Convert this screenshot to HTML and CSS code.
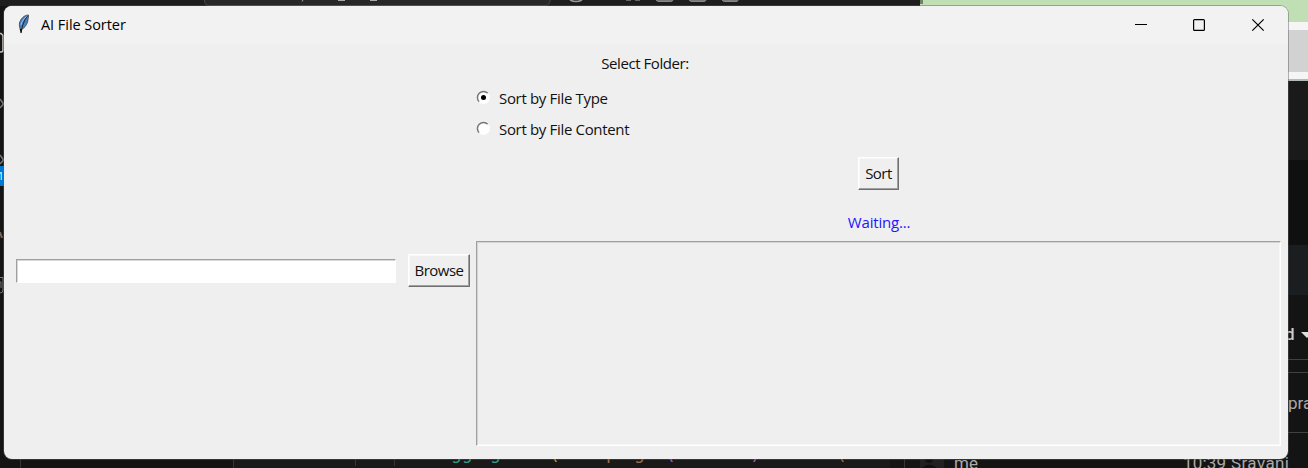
FILE: index.html
```html
<!DOCTYPE html>
<html lang="en">
<head>
<meta charset="utf-8">
<title>AI File Sorter</title>
<link rel="stylesheet" href="styles.css">
</head>
<body>
<div class="desktop">
  <svg class="backdrop" width="1308" height="468" viewBox="0 0 1308 468" aria-hidden="true">
    <rect width="1308" height="468" fill="#141414"/>
    <!-- editor title strip -->
    <rect width="920" height="6" fill="#1e1e1e"/>
    <path d="M204.500 0q0 5.500 5 5.500H545q5 0 5-5.500" fill="#282828" stroke="#4a4a4a"/>
    <path d="M302 1.500l1-1.500M338 .5h7M370 .5h7" stroke="#aaa"/>
    <path d="M570 0q6 3 12 0" fill="none" stroke="#999" stroke-width="1.500"/>
    <path d="M626 .5h5M635 .5h5" stroke="#666"/>
    <path d="M656 0q1 1.500 3 1.500h11q3 0 3-1.500M689 0q1 1.500 3 1.500h11q3 0 3-1.500M722 0q1 1.500 3 1.500h11q2 0 2-1.500M729.500 0v1" fill="#777" stroke="#888"/>
    <!-- browser edge -->
    <rect x="920" width="388" height="22" fill="#c1dfb5"/>
    <rect x="920" width="3" height="4" fill="#6f8267"/>
    <rect x="1280" y="22" width="28" height="58" fill="#f5f5f5"/>
    <rect x="1280" y="30" width="28" height="42" fill="#d2d2d2"/>
    <rect x="1280" y="79" width="28" height="2" fill="#b2bbb6"/>
    <rect x="1280" y="81" width="28" height="79" fill="#1a1a1a"/>
    <rect x="1280" y="160" width="28" height="85" fill="#101010"/>
    <rect x="1280" y="245" width="28" height="50" fill="#1b1e20"/>
    <path d="M1288 359.500h20M1288 372.500h20M1288 432.500h20" stroke="#414141"/>
    <path d="M1301 332h12l-6 6z" fill="#ddd"/>
    <g class="browser-text">
      <text x="1285" y="340" class="strong">d</text>
      <text x="1288" y="409">pra</text>
      <text x="954" y="468.500">me</text>
      <text x="1183" y="469" textLength="43">10:39</text>
      <text x="1231" y="469" textLength="58">Sravani</text>
    </g>
    <rect x="920" y="459" width="24" height="9" fill="#202222"/>
    <circle cx="929" cy="459" r="4" fill="#111"/>
    <path d="M922 468q7-7 15 0" fill="#111"/>
    <!-- activity bar fragments -->
    <path d="M-4 33.500H1l2 2V50q0 2-2 2h-5" fill="none" stroke="#c9c4bc" stroke-width="1.500"/>
    <path d="M0 99l3.500 5L0 108M0 155l3.500 5L0 164" fill="none" stroke="#777" stroke-width="1.500"/>
    <rect y="166" width="4" height="20" fill="#0078d4"/>
    <text x="-2" y="180" class="badge">1</text>
    <path d="M0 232l2 6" stroke="#76645a" stroke-width="2"/>
    <path d="M0 277.500h3V290q0 3-3 3M0 282h1v6" fill="none" stroke="#777"/>
    <!-- code rows below the window -->
    <rect x="233" y="459" width="657" height="9" fill="#191919"/>
    <path d="M20.500 459v9M233.500 459v9M355.500 459v7M394.500 459v7M904.500 459v9" stroke="#353535"/>
    <g class="code-text">
      <text x="451" y="459">gg</text>
      <text x="490" y="459">g</text>
      <text x="549" y="460" class="yellow">(</text>
      <text x="606" y="459" class="string">p</text>
      <text x="634" y="459" class="string">g</text>
      <text x="665" y="460" class="purple">(</text>
      <text x="750" y="460" class="purple">)</text>
      <text x="836" y="460" class="string">(</text>
    </g>
  </svg>

  <main class="window">
    <header class="titlebar">
      <svg class="feather" width="14" height="21" viewBox="0 0 14 21">
        <path d="M11.500 1C7 1 3.500 5 2.500 9c-.5 3 .3 5.500 1.500 6.500 3-1 5.500-4 6.500-7.500.6-2 .9-4.500 1-7z" fill="#4480c8" stroke="#55585d"/>
        <path d="M10.500 2C7.500 6 5 11 4.200 19" fill="none" stroke="#222"/>
        <path d="M9.500 2.500C6.500 5 4.500 8 4 11" fill="none" stroke="#9ec6ee"/>
        <path d="M2.500 14.500l1.300 5 1.500-4z" fill="#111"/>
      </svg>
      <h1 class="title">AI File Sorter</h1>
      <svg class="control" width="58" height="38" viewBox="0 0 58 38"><path d="M23 18.500h12"/></svg>
      <svg class="control" width="58" height="38" viewBox="0 0 58 38"><rect x="23.600" y="13.600" width="10.800" height="10.800" rx="1"/></svg>
      <svg class="control" width="60" height="38" viewBox="0 0 60 38"><path d="M24.300 13.300l11.400 11.400M35.700 13.300L24.300 24.700"/></svg>
    </header>
    <section class="client">
      <div class="heading"><span class="label label-folder">Select Folder:</span></div>
      <div class="columns">
        <div class="picker">
          <input class="entry" type="text" aria-label="Folder">
          <button class="button browse">Browse</button>
        </div>
        <div class="options">
          <div class="choice">
            <svg class="radio" width="15" height="15" viewBox="0 0 15 15"><circle cx="7.500" cy="7.500" r="6" fill="#fff"/><path d="M3.200 11.800A6 6 0 0 1 11.800 3.200" class="radio-shade"/><path d="M11.800 3.200A6 6 0 0 1 3.200 11.800" class="radio-light"/><circle cx="7.500" cy="7.500" r="2.500"/></svg>
            <span class="label">Sort by File Type</span>
          </div>
          <div class="choice">
            <svg class="radio" width="15" height="15" viewBox="0 0 15 15"><circle cx="7.500" cy="7.500" r="6" fill="#fff"/><path d="M3.200 11.800A6 6 0 0 1 11.800 3.200" class="radio-shade"/><path d="M11.800 3.200A6 6 0 0 1 3.200 11.800" class="radio-light"/></svg>
            <span class="label">Sort by File Content</span>
          </div>
          <button class="button sort">Sort</button>
          <p class="status">Waiting...</p>
          <div class="output"></div>
        </div>
      </div>
    </section>
  </main>
</div>
</body>
</html>
```
FILE: styles.css
```css
* { box-sizing: border-box; }
body { margin: 0; overflow: hidden; font-family: "Open Sans", "Noto Sans", sans-serif; color: #111; }
.desktop { position: relative; width: 1308px; height: 468px; overflow: hidden; }
.backdrop { display: block; }
.browser-text { font: 17px Roboto, sans-serif; fill: #aaa; }
.strong { font-weight: 500; fill: #ccc; }
.badge { font: 10px "Open Sans", sans-serif; fill: #fff; }
.code-text { font: 18px "DejaVu Sans Mono", monospace; fill: #2aa187; }
.yellow { fill: #c5a000; }
.string { fill: #a66a50; }
.purple { fill: #b558bd; }

.window {
  position: absolute; left: 4px; top: 6px; width: 1284px; height: 453px;
  display: flex; flex-direction: column; overflow: hidden;
  background: #efefef; border-radius: 8px;
  box-shadow: 0 0 0 1px rgba(90, 90, 90, .45);
}
.titlebar { display: flex; align-items: center; height: 38px; flex: none; padding-left: 13px; background: #f2f2f2; }
.feather { margin-top: -2px; }
.title { flex: 1; margin: 0 0 0 10px; font-size: 14.500px; line-height: 20px; font-weight: 400; letter-spacing: -.05px; color: #000; }
.control { fill: none; stroke: #000; stroke-width: 1.200; }

.client { flex: 1; display: flex; flex-direction: column; font-size: 15px; line-height: 20px; letter-spacing: -.33px; }
.heading { height: 38px; padding-top: 9px; text-align: center; }
.label-folder { letter-spacing: -.43px; margin-right: 2px; }
.columns { flex: 1; display: flex; }
.picker { width: 472px; display: flex; align-items: center; gap: 12px; padding: 0 6px 0 12px; }
.entry {
  width: 381px; height: 24px; padding: 0 4px; outline: 0; border-radius: 0; background: #fff;
  border: 1px solid; border-color: #a0a0a0 #fff #fff #a0a0a0;
  box-shadow: inset 1px 1px #d7d7d7;
}
.options { width: 805px; display: flex; flex-direction: column; }
.choice { display: flex; align-items: center; height: 31px; gap: 8px; }
.choice .label { padding-top: 1px; }
.radio { display: block; }
.radio-shade { fill: none; stroke: #777; stroke-width: 1.500; }
.radio-light { fill: none; stroke: #fff; }
.label { white-space: nowrap; }
.button {
  padding: 0 0 2px; border: 1px solid; border-color: #fff #707070 #707070 #fff; border-radius: 0;
  box-shadow: inset -1px -1px #a0a0a0, inset 1px 1px #f8f8f8;
  height: 33px; background: #efefef; color: #111; font: inherit; letter-spacing: -.5px; white-space: nowrap;
}
.browse { width: 62px; flex: none; }
.sort { width: 41px; align-self: center; margin-top: 13px; }
.status { margin: 22px 0 9px; padding-left: 1px; text-align: center; letter-spacing: -.2px; color: #2414ff; }
.output { height: 205px; border: 1px solid; border-color: #a0a0a0 #fff #fff #a0a0a0; box-shadow: inset 1px 1px #d4d4d4, inset -1px -1px #f7f7f7; }
```
